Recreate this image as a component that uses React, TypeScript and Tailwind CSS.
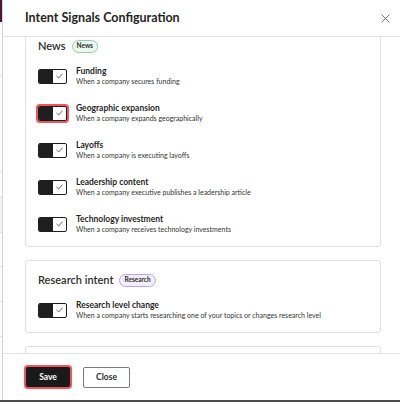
import React from "react";

const font = { fontFamily: "Lato, 'Noto Sans', sans-serif" };

function Toggle({ focused }: { focused?: boolean }) {
  return (
    <div
      className={`flex h-[15px] w-[29px] shrink-0 overflow-hidden rounded-[2px] border border-[#1f1f1f] bg-white ${
        focused ? "ring-2 ring-[#f2545b]" : ""
      }`}
    >
      <div className="h-full w-[14px] bg-[#1f1f1f]" />
      <div className="flex flex-1 items-center justify-center">
        <svg width="7" height="6" viewBox="0 0 7 6" fill="none">
          <path d="M0.8 3.2 L2.7 5 L6.2 1" stroke="#555" strokeWidth="0.9" strokeLinecap="round" strokeLinejoin="round" />
        </svg>
      </div>
    </div>
  );
}

function Row({ title, desc, focused }: { title: string; desc: string; focused?: boolean }) {
  return (
    <div className="flex h-[20px] items-center gap-[9px]">
      <Toggle focused={focused} />
      <div className="flex flex-col">
        <div className="text-[8.5px] font-bold leading-[10px] text-[#1f1f1f]">{title}</div>
        <div className="text-[7px] leading-[10px] text-[#333]">{desc}</div>
      </div>
    </div>
  );
}

function Card({
  title,
  badge,
  badgeClass,
  children,
}: {
  title: string;
  badge: string;
  badgeClass: string;
  children: React.ReactNode;
}) {
  return (
    <div className="rounded-[3px] border border-[#dfe1e5] bg-white px-[12px] pb-[12px] pt-[11px]">
      <div className="flex h-[16px] items-center gap-[6px]">
        <span className="text-[11px] font-semibold text-[#2d2d2d]">{title}</span>
        <span
          className={`flex h-[13px] items-center rounded-full border px-[4px] text-[6.5px] font-bold text-[#2d2d2d] ${badgeClass}`}
        >
          {badge}
        </span>
      </div>
      <div className="mt-[12px] flex flex-col gap-[17px]">{children}</div>
    </div>
  );
}

export default function App() {
  return (
    <div className="flex h-[402px] w-[400px] flex-col overflow-hidden bg-white" style={font}>
      <div className="flex min-h-0 flex-1">
        {/* page behind modal */}
        <div className="flex w-[2px] flex-col bg-white">
          <div className="h-[22px] bg-[#4a1a3a]" />
          <div className="h-[54px] border-b border-[#e2e2e2]" />
          <div className="h-[96px] border-b border-[#e2e2e2]" />
          <div className="h-[25px] border-b border-[#e2e2e2]" />
          <div className="h-[36px] border-b border-[#e2e2e2] bg-[#f3f3f3]" />
          <div className="h-[34px] border-b border-[#e2e2e2]" />
          <div className="h-[35px] border-b border-[#e2e2e2]" />
          <div className="h-[35px] border-b border-[#e2e2e2]" />
        </div>
        {/* modal */}
        <div className="flex min-w-0 flex-1 flex-col border-l border-[#d4d4d4] bg-white">
          <div className="flex h-[37px] shrink-0 items-center justify-between border-b border-[#e3e3e3] pl-[22px] pr-[10px]">
            <span className="text-[12.5px] font-bold text-[#1f1f1f]">Intent Signals Configuration</span>
            <svg width="9" height="9" viewBox="0 0 9 9">
              <path d="M0.5 0.5 L8.5 8.5 M8.5 0.5 L0.5 8.5" stroke="#666" strokeWidth="0.9" />
            </svg>
          </div>
          <div className="min-h-0 flex-1 overflow-hidden pl-[22px] pr-[19px]">
            <div className="mt-[-11px] flex flex-col gap-[13px]">
              <Card title="News" badge="News" badgeClass="border-[#8fd3a5] bg-[#eaf7ee]">
                <Row title="Funding" desc="When a company secures funding" />
                <Row title="Geographic expansion" desc="When a company expands geographically" focused />
                <Row title="Layoffs" desc="When a company is executing layoffs" />
                <Row title="Leadership content" desc="When a company executive publishes a leadership article" />
                <Row title="Technology investment" desc="When a company receives technology investments" />
              </Card>
              <Card title="Research intent" badge="Research" badgeClass="border-[#b8a6f2] bg-[#f2eefd]">
                <Row
                  title="Research level change"
                  desc="When a company starts researching one of your topics or changes research level"
                />
              </Card>
              <div className="h-[40px] rounded-[3px] border border-[#dfe1e5]" />
            </div>
          </div>
          <div className="flex h-[47px] shrink-0 items-center gap-[13px] border-t border-[#e3e3e3] pl-[23px]">
            <button className="flex h-[20px] w-[44px] items-center justify-center rounded-[2px] bg-[#1a1a1a] text-[8.5px] font-bold text-white ring-2 ring-[#f2545b]">
              Save
            </button>
            <button className="flex h-[21px] w-[47px] items-center justify-center rounded-[2px] border border-[#7c7c7c] bg-white text-[8.5px] font-bold text-[#2d2d2d]">
              Close
            </button>
          </div>
        </div>
      </div>
      <div className="h-[2px] bg-[#4d4d4d]" />
    </div>
  );
}
